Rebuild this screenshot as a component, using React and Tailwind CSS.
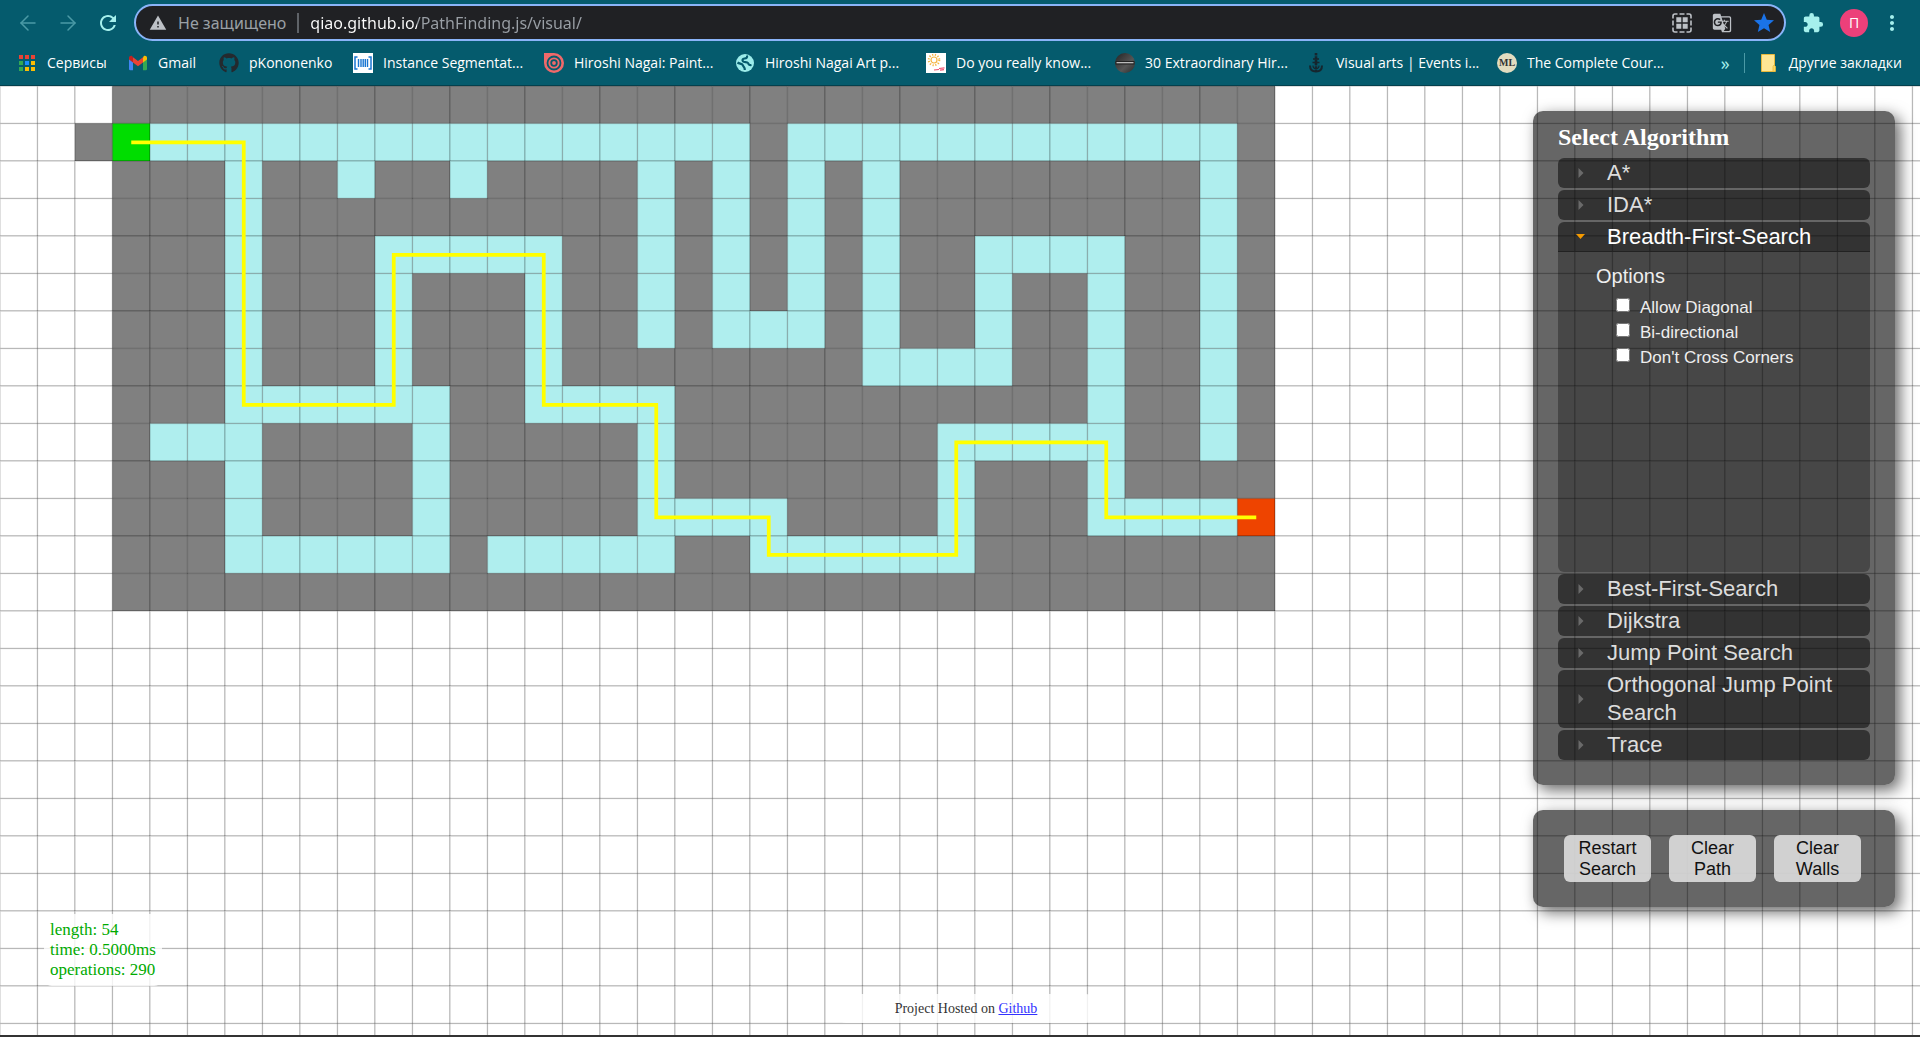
import { ArrowLeft, ArrowRight } from "lucide-react";
import { FaGithub } from "react-icons/fa";
import { MdRefresh, MdWarning, MdExtension, MdStar, MdMoreVert, MdGTranslate } from "react-icons/md";

const CELL = 30;
const COLS = 86;
const ROWS = 48;
const MAZE = { x: 3, y: 0, w: 31, h: 14 };
const START = [3, 1];
const END = [33, 11];

/* corridors as [column, row, width, height] */
const CORRIDORS = [
  [4, 1, 16, 1], [21, 1, 12, 1], [6, 2, 1, 11], [9, 2, 1, 1], [12, 2, 1, 1],
  [17, 2, 1, 5], [19, 2, 1, 5], [19, 6, 3, 1], [21, 2, 1, 5], [23, 2, 1, 6],
  [23, 7, 4, 1], [26, 4, 1, 4], [26, 4, 4, 1], [29, 4, 1, 8], [29, 11, 4, 1],
  [32, 2, 1, 8], [25, 9, 5, 1], [25, 9, 1, 4], [20, 12, 6, 1], [17, 11, 4, 1],
  [17, 8, 1, 5], [13, 12, 5, 1], [14, 8, 4, 1], [14, 4, 1, 5], [10, 4, 5, 1],
  [10, 4, 1, 5], [6, 8, 6, 1], [11, 8, 1, 5], [6, 12, 6, 1], [4, 9, 3, 1],
];

const PATH = [
  [3, 1], [6, 1], [6, 8], [10, 8], [10, 4], [14, 4], [14, 8], [17, 8],
  [17, 11], [20, 11], [20, 12], [25, 12], [25, 9], [29, 9], [29, 11], [33, 11],
];

const inside = (c, r, [x, y, w, h]) => c >= x && c < x + w && r >= y && r < y + h;

function cellColor(c, r) {
  if (c === START[0] && r === START[1]) return "#00dd00";
  if (c === END[0] && r === END[1]) return "#ee4400";
  if (c === 2 && r === 1) return "#808080";
  if (CORRIDORS.some((k) => inside(c, r, k))) return "#afeeee";
  if (inside(c, r, [MAZE.x, MAZE.y, MAZE.w, MAZE.h])) return "#808080";
  return "#ffffff";
}

const CELLS = [];
for (let r = 0; r < ROWS; r++)
  for (let c = 0; c < COLS; c++) CELLS.push({ c, r, fill: cellColor(c, r) });

function GridCanvas() {
  const points = PATH.map(([c, r]) => `${(c + 0.5) * CELL},${(r + 0.5) * CELL}`).join(" ");
  return (
    <svg className="absolute inset-0 h-full w-full" aria-label="Path finding grid">
      <g transform="scale(1.25)">
        {CELLS.map(({ c, r, fill }) => (
          <rect key={`${c}-${r}`} x={c * CELL} y={r * CELL} width={CELL} height={CELL} fill={fill} stroke="#000" strokeOpacity="0.2" />
        ))}
        <polyline points={points} fill="none" stroke="#ffff00" strokeWidth="3" />
      </g>
    </svg>
  );
}

/* ---------- bookmark icons ---------- */

function AppsIcon() {
  const colors = ["#ea4335", "#ea4335", "#ea4335", "#34a853", "#1a8cff", "#fbbc04", "#34a853", "#fbbc04", "#fbbc04"];
  return (
    <svg viewBox="0 0 20 20" className="h-5 w-5 shrink-0">
      {colors.map((f, i) => (
        <rect key={i} x={2 + (i % 3) * 6} y={2 + Math.floor(i / 3) * 6} width="4" height="4" fill={f} />
      ))}
    </svg>
  );
}

function GmailIcon() {
  return (
    <svg viewBox="0 0 20 20" className="h-5 w-5 shrink-0">
      <path d="M1 5v11a1.3 1.3 0 0 0 1.300 1.300H5V8z" fill="#4285f4" />
      <path d="M19 5v11a1.300 1.300 0 0 1-1.300 1.300H15V8z" fill="#34a853" />
      <path d="M15 4.500V9.500L19 6.500V5c0-2-2-2.800-3.300-1.800z" fill="#fbbc04" />
      <path d="M5 9.500V4.200l5 3.800 5-3.800v5.300l-5 3.800z" fill="#ea4335" />
      <path d="M1 5v1.500l4 3V4.200l-.7-1C3 2.200 1 3 1 5z" fill="#c5221f" />
    </svg>
  );
}

function SegmentIcon() {
  return (
    <svg viewBox="0 0 20 20" className="h-5 w-5 shrink-0">
      <rect width="20" height="20" fill="#fff" />
      <path d="M4.500 4H2v12h2.500M15.500 4H18v12h-2.500" fill="none" stroke="#1976d2" strokeWidth="1.500" />
      <path d="M5.500 6v8M8 6v8M10.200 6v8M12.300 6v8M14.500 6v8" stroke="#1976d2" strokeWidth="1.400" />
    </svg>
  );
}

function TargetIcon() {
  return (
    <svg viewBox="0 0 20 20" className="h-5 w-5 shrink-0">
      <path d="M0 0h10a10 10 0 1 1-10 10z" fill="#f0696a" />
      <circle cx="10" cy="10" r="6.500" fill="none" stroke="#055b6d" strokeWidth="1.800" />
      <circle cx="10" cy="10" r="2.800" fill="none" stroke="#055b6d" strokeWidth="1.800" />
    </svg>
  );
}

function GlobeIcon() {
  return (
    <svg viewBox="0 0 20 20" className="h-5 w-5 shrink-0">
      <circle cx="10" cy="10" r="9" fill="#9cecea" />
      <g fill="none" stroke="#055b6d" strokeWidth="2.200" strokeLinejoin="round">
        <path d="M12 2.500c.5 2-.5 2.700-2.500 3S7 7 8 8.300s4 .2 5 1.700.5 2.500 3.500 2" />
        <path d="M2.500 9.500c2 1.500 5 1 5.500 3s2 1.500 1.800 4.500" />
      </g>
    </svg>
  );
}

function SunIcon() {
  return (
    <svg viewBox="0 0 20 20" className="h-5 w-5 shrink-0">
      <rect width="20" height="20" fill="#fff" />
      <circle cx="8" cy="7" r="3" fill="none" stroke="#f5b642" strokeWidth="1.200" />
      <circle cx="8" cy="7" r="5.300" fill="none" stroke="#f5b642" strokeWidth="2" strokeDasharray="1.200 1.600" />
      <path d="M8 17l5-.5M13 15.500l5.500-.7M14 17.200l4-.5" stroke="#f0506e" strokeWidth="1.200" />
    </svg>
  );
}

function SphereIcon() {
  return (
    <svg viewBox="0 0 20 20" className="h-5 w-5 shrink-0">
      <defs>
        <linearGradient id="sphere" x1="0" x2="1" y1="0" y2="1">
          <stop offset="0" stopColor="#222" />
          <stop offset="0.6" stopColor="#555" />
          <stop offset="1" stopColor="#2a2a2a" />
        </linearGradient>
      </defs>
      <circle cx="10" cy="10" r="10" fill="url(#sphere)" />
      <rect x="0.500" y="8" width="19" height="3.500" fill="#222" />
      <path d="M1.500 9.700h17" stroke="#ccc" strokeWidth="1.200" />
    </svg>
  );
}

function AnchorIcon() {
  return (
    <svg viewBox="0 0 20 20" className="h-5 w-5 shrink-0" fill="none" stroke="#16262e">
      <path d="M10 0v18" strokeWidth="2.600" strokeDasharray="2.600 0.700" />
      <path d="M7 6h6M6.500 9.500h7" strokeWidth="1.500" />
      <path d="M4 12.500c0 4 2.500 6 6 6s6-2 6-6" strokeWidth="2" />
      <path d="M7 12.500c0 2 1 3.200 3 3.200s3-1.200 3-3.200" strokeWidth="1.200" />
    </svg>
  );
}

function MlIcon() {
  return (
    <span className="flex h-5 w-5 shrink-0 items-center justify-center rounded-full bg-[#e2dcc0] font-['Liberation_Serif',serif] text-[10px] leading-none font-bold text-[#333]">
      ML
    </span>
  );
}

function FolderIcon() {
  return (
    <svg viewBox="0 0 20 20" className="h-5 w-5 shrink-0">
      <path d="M2.500 1.500h13v17h-13z" fill="#ffe694" stroke="#e8b93c" />
      <path d="M14 18.500v-5l1-1.500 1.500 1.500v5z" fill="#ffd75e" stroke="#e8b93c" strokeWidth="0.800" />
    </svg>
  );
}

function QrIcon() {
  return (
    <svg viewBox="0 0 20 20" className="h-5 w-5 shrink-0" fill="none" stroke="#bdc1c6" strokeWidth="1.600">
      <path d="M1 5.500V3a2 2 0 0 1 2-2h2.500M7.500 1h5M14.500 1H17a2 2 0 0 1 2 2v2.500M19 7.500v5M19 14.500V17a2 2 0 0 1-2 2h-2.500M12.500 19h-5M5.500 19H3a2 2 0 0 1-2-2v-2.500M1 12.500v-5" />
      <path d="M4.300 4.300h5v5h-5zM10.700 4.300h5v5h-5zM4.300 10.700h5v5h-5zM10.700 10.700h5v5h-5z" fill="#bdc1c6" stroke="none" />
    </svg>
  );
}

const BOOKMARKS = [
  { label: "Сервисы", icon: <AppsIcon />, width: "w-[111px]" },
  { label: "Gmail", icon: <GmailIcon />, width: "w-[91px]" },
  { label: "pKononenko", icon: <FaGithub className="h-5 w-5 shrink-0 text-[#24292e]" />, width: "w-[134px]" },
  { label: "Instance Segmentat...", icon: <SegmentIcon />, width: "w-[191px]" },
  { label: "Hiroshi Nagai: Paint...", icon: <TargetIcon />, width: "w-[191px]" },
  { label: "Hiroshi Nagai Art p...", icon: <GlobeIcon />, width: "w-[191px]" },
  { label: "Do you really know...", icon: <SunIcon />, width: "w-[189px]" },
  { label: "30 Extraordinary Hir...", icon: <SphereIcon />, width: "w-[191px]" },
  { label: "Visual arts | Events i...", icon: <AnchorIcon />, width: "w-[191px]" },
  { label: "The Complete Cour...", icon: <MlIcon />, width: "w-[191px]" },
];

function BrowserChrome() {
  return (
    <header className="border-b border-[#04404d] bg-[#055b6d] font-['Open_Sans',sans-serif]">
      <div className="flex items-center pt-1 pr-4 pl-4">
        <button type="button" aria-label="Back" className="flex w-10 text-[#4b9aa6]"><ArrowLeft className="h-6 w-6" strokeWidth={1.5} /></button>
        <button type="button" aria-label="Forward" className="flex w-10 text-[#4b9aa6]"><ArrowRight className="h-6 w-6" strokeWidth={1.5} /></button>
        <button type="button" aria-label="Reload" className="flex w-[38px] text-[#a5f0ec]"><MdRefresh className="h-6 w-6" /></button>
        <div className="flex h-[37px] flex-1 items-center rounded-full border-2 border-[#8ab4f8] bg-[#202124] pr-2 pl-[13px] font-['Noto_Sans','Open_Sans',sans-serif] text-base">
          <MdWarning className="h-[18px] w-[18px] text-[#bdc1c6]" />
          <span className="ml-[11px] text-[#9aa0a6]">Не защищено</span>
          <span className="mx-[11px] h-5 w-0.5 bg-[#5f6368]" />
          <input
            type="text"
            aria-label="Address"
            defaultValue="qiao.github.io/PathFinding.js/visual/"
            className="h-7 min-w-0 flex-1 bg-[linear-gradient(90deg,#ffffff_107px,#9aa0a6_107px)] bg-clip-text text-transparent outline-none"
          />
          <div className="flex items-center gap-5">
            <QrIcon />
            <MdGTranslate className="h-5 w-5 text-[#bdc1c6]" />
            <MdStar className="h-6 w-6 text-[#1a73e8]" />
          </div>
        </div>
        <MdExtension className="ml-4 h-[22px] w-[22px] text-[#a5f0ec]" />
        <span className="ml-4 flex h-7 w-7 items-center justify-center rounded-full bg-[#ec407a] text-sm text-white">П</span>
        <MdMoreVert className="ml-3 h-6 w-6 text-[#a5f0ec]" />
      </div>
      <nav className="flex h-11 items-center pr-[18px] pl-[17px] text-sm text-white">
        {BOOKMARKS.map((b) => (
          <a key={b.label} href="#bookmark" className={`flex min-w-0 items-center gap-2.5 whitespace-nowrap ${b.width}`}>
            {b.icon}
            <span>{b.label}</span>
          </a>
        ))}
        <button type="button" className="ml-auto text-lg leading-none text-[#a5f0ec]">»</button>
        <span className="mx-3.5 h-5 w-px bg-[#4b9aa6]" />
        <a href="#other" className="flex items-center gap-2.5 whitespace-nowrap"><FolderIcon />Другие закладки</a>
      </nav>
    </header>
  );
}

function Header({ label, open }) {
  return (
    <h3>
      <button
        type="button"
        aria-expanded={!!open}
        className={`flex w-full items-center bg-black/50 pt-px pl-[18px] text-left text-[22px] leading-7 ${open ? "rounded-t-md border-b border-[#222] text-white" : "rounded-md pb-px text-[#dddddd]"}`}
      >
        <svg viewBox="0 0 10 10" className="h-2.5 w-2.5 shrink-0">
          {open ? <path d="M0 2h9L4.500 7z" fill="#f59a00" /> : <path d="M2.500 0v10l5-5z" fill="#6a6a6a" />}
        </svg>
        <span className="ml-[21px]">{label}</span>
      </button>
    </h3>
  );
}

const OPTIONS = ["Allow Diagonal", "Bi-directional", "Don't Cross Corners"];
const PANEL = "rounded-[10px] bg-black/60 pr-[25px] pb-[25px] shadow-[5px_5px_15px_rgba(0,0,0,0.6)]";

function Sidebar() {
  return (
    <aside className="absolute top-[25px] right-[25px] flex w-[362px] flex-col gap-[25px] font-['Liberation_Sans',Arial,sans-serif]">
      <section className={`${PANEL} pt-3 pl-[25px]`}>
        <h2 className="mb-[7px] font-['Liberation_Serif',serif] text-2xl leading-7 font-bold text-white">Select Algorithm</h2>
        <div className="flex flex-col gap-0.5">
          <Header label="A*" />
          <Header label="IDA*" />
          <div>
            <Header label="Breadth-First-Search" open />
            <fieldset className="h-80 rounded-b-md bg-black/30 pt-2.5 pl-[38px] text-[#eeeeee]">
              <legend className="float-left w-full text-xl leading-7">Options</legend>
              <div className="clear-both pt-[5px] pl-5">
                {OPTIONS.map((o) => (
                  <label key={o} className="flex h-[25px] text-[17px] leading-[25px]">
                    <input type="checkbox" className="mt-[3px] mr-2.5 h-[14px] w-[14px]" />
                    {o}
                  </label>
                ))}
              </div>
            </fieldset>
          </div>
          <Header label="Best-First-Search" />
          <Header label="Dijkstra" />
          <Header label="Jump Point Search" />
          <Header label="Orthogonal Jump Point Search" />
          <Header label="Trace" />
        </div>
      </section>
      <section className={`${PANEL} flex gap-[18px] pt-[25px] pl-[31px]`}>
        {["Restart Search", "Clear Path", "Clear Walls"].map((b) => (
          <button key={b} type="button" className="h-[47px] w-[87px] rounded-md bg-[#dddddd]/90 px-2 text-lg leading-[21px] text-[#111111]">
            {b}
          </button>
        ))}
      </section>
    </aside>
  );
}

export default function App() {
  return (
    <div className="flex min-h-screen flex-col bg-white">
      <BrowserChrome />
      <main className="relative flex-1 overflow-hidden border-b-2 border-[#333333]">
        <GridCanvas />
        <Sidebar />
        <div className="absolute bottom-[49px] left-[44px] rounded-lg bg-white/80 p-1.5 font-['Liberation_Serif',serif] text-[17px] leading-5 text-[#00aa00]">
          <p>length: 54</p>
          <p>time: 0.5000ms</p>
          <p>operations: 290</p>
        </div>
        <footer className="absolute bottom-3 left-1/2 w-64 -translate-x-[122px] rounded-lg bg-white/80 py-1 text-center font-['Liberation_Serif',serif] text-sm leading-[21px] text-[#333333]">
          Project Hosted on <a href="#github" className="text-[#3333ff] underline">Github</a>
        </footer>
      </main>
    </div>
  );
}
